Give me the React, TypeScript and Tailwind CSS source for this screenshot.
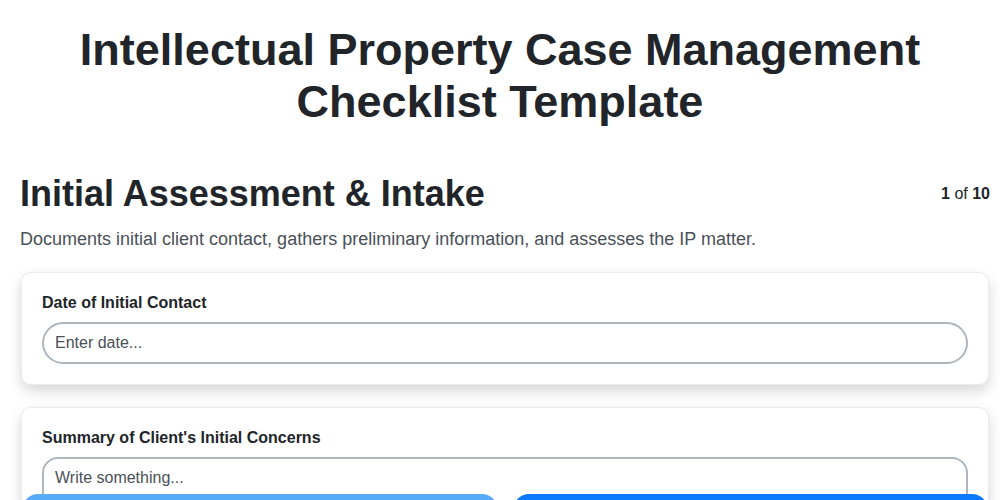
import React from "react";

export default function App() {
  return (
    <div className="h-screen overflow-hidden bg-white text-[#212529]" style={{ fontFamily: '"Liberation Sans", Arial, sans-serif' }}>
      <h1 className="pt-[24px] text-center text-[45px] font-bold leading-[52px] px-16">
        Intellectual Property Case Management Checklist Template
      </h1>
      <div className="pl-5 pr-[10px]">
        <div className="mt-[44px] flex items-start justify-between">
          <h2 className="text-[36px] font-bold leading-[44px]">Initial Assessment &amp; Intake</h2>
          <div className="mt-[12px] text-[16px] leading-[20px]">
            <span className="font-bold">1</span> of <span className="font-bold">10</span>
          </div>
        </div>
        <p className="mt-[10px] text-[18px] leading-[26px] text-[#495057]">
          Documents initial client contact, gathers preliminary information, and assesses the IP matter.
        </p>
        <div className="mt-[20px] flex flex-col gap-[22px] px-[1px]">
          <div className="rounded-[10px] border border-[#e9ecef] bg-white px-5 pt-5 pb-5 shadow-[0_6px_14px_rgba(0,0,0,0.16)]">
            <label className="block text-[16px] font-bold leading-[20px]">Date of Initial Contact</label>
            <input
              className="mt-[9px] block h-[42px] w-full rounded-full border-2 border-[#adb5bd] px-[11px] text-[16px] text-[#495057] placeholder-[#495057] outline-none"
              placeholder="Enter date..."
            />
          </div>
          <div className="rounded-[10px] border border-[#e9ecef] bg-white px-5 pt-5 pb-5 shadow-[0_6px_14px_rgba(0,0,0,0.16)]">
            <label className="block text-[16px] font-bold leading-[20px]">Summary of Client's Initial Concerns</label>
            <textarea
              className="mt-[9px] block h-[120px] w-full resize-none rounded-[16px] border-2 border-[#adb5bd] px-[11px] py-[7px] text-[16px] text-[#495057] placeholder-[#495057] outline-none"
              placeholder="Write something..."
            />
          </div>
        </div>
      </div>
      <div className="fixed left-0 right-0 top-[494px] flex gap-[15px] pl-[22px] pr-[12px]">
        <button className="flex h-[60px] flex-1 items-center justify-center rounded-[16px] bg-[#58abf9] text-[16px] text-white">Previous</button>
        <button className="flex h-[60px] flex-1 items-center justify-center rounded-[16px] bg-[#0a7bff] text-[16px] text-white">Next</button>
      </div>
    </div>
  );
}
